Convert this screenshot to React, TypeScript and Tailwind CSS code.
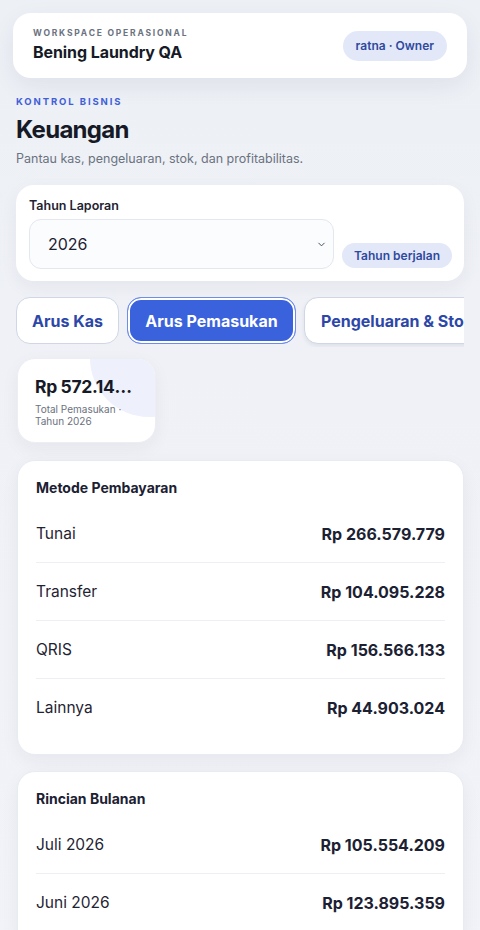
import { ChevronDown } from 'lucide-react';

type Row = { label: string; value: string };

const methods: Row[] = [
    { label: 'Tunai', value: 'Rp 266.579.779' },
    { label: 'Transfer', value: 'Rp 104.095.228' },
    { label: 'QRIS', value: 'Rp 156.566.133' },
    { label: 'Lainnya', value: 'Rp 44.903.024' },
];

const months: Row[] = [
    { label: 'Juli 2026', value: 'Rp 105.554.209' },
    { label: 'Juni 2026', value: 'Rp 123.895.359' },
];

function ListCard({ title, rows, more }: { title: string; rows: Row[]; more?: boolean }) {
    return (
        <div className="bg-white rounded-[18px] border border-[#e8ebf2] shadow-[0_6px_18px_rgba(30,41,80,0.05)] px-[18px] pt-[17px] pb-[17px]">
            <h2 className="text-[14px] leading-5 font-bold text-[#1b2132] mb-[7px]">{title}</h2>
            <div className={`divide-y divide-[#eceff4] ${more ? 'border-b border-[#eceff4]' : ''}`}>
                {rows.map(r => (
                    <div key={r.label} className="flex items-center justify-between h-[58px]">
                        <span className="text-[15.5px] text-[#1f2433]">{r.label}</span>
                        <span className="text-[16px] font-bold text-[#1b2132]">{r.value}</span>
                    </div>
                ))}
            </div>
        </div>
    );
}

export default function App() {
    return (
        <div className="min-h-screen bg-gradient-to-b from-[#edf0f5] to-[#f2f3f8] font-['Inter',sans-serif] pb-6 overflow-hidden">
            <div className="pt-[13px] px-[13px]">
                <div className="bg-white rounded-[18px] shadow-[0_8px_24px_rgba(30,41,80,0.07)] h-[65px] pl-5 pr-5 flex items-center justify-between">
                    <div>
                        <p className="text-[8.5px] font-bold tracking-[0.21em] text-[#6b7280] uppercase leading-3">Workspace Operasional</p>
                        <p className="text-[16px] font-bold text-[#151a26] tracking-[-0.005em] leading-6 mt-[1px]">Bening Laundry QA</p>
                    </div>
                    <span className="h-[30px] px-[13px] rounded-full bg-[#e3e8f9] text-[#2f4a9e] text-[12px] font-semibold flex items-center">ratna · Owner</span>
                </div>
            </div>

            <div className="px-4">
                <p className="mt-[18px] text-[9.5px] font-bold tracking-[0.2em] text-[#3f60d8] uppercase leading-3">Kontrol Bisnis</p>
                <h1 className="mt-[6px] text-[24px] leading-8 font-bold text-[#151a26] tracking-[-0.03em]">Keuangan</h1>
                <p className="mt-[5px] text-[12.5px] text-[#6b7280] leading-4">Pantau kas, pengeluaran, stok, dan profitabilitas.</p>

                <div className="mt-[18px] bg-white rounded-[18px] shadow-[0_6px_18px_rgba(30,41,80,0.05)] h-[96px] pl-[13px] pr-[12px] pt-[13px]">
                    <p className="text-[12.5px] font-semibold text-[#1f2433] leading-4">Tahun Laporan</p>
                    <div className="flex items-end gap-2 mt-[5px]">
                        <div className="flex-1 h-[50px] rounded-[12px] border border-[#e3e7ef] bg-[#fbfcfe] flex items-center justify-between pl-[18px] pr-[6px]">
                            <span className="text-[16px] text-[#1b2132]">2026</span>
                            <ChevronDown size={11} strokeWidth={2} className="text-[#374151]" />
                        </div>
                        <span className="shrink-0 whitespace-nowrap h-[25px] px-[12px] rounded-full bg-[#e3e8f9] text-[#2f4a9e] text-[12px] font-semibold flex items-center mb-[1px]">Tahun berjalan</span>
                    </div>
                </div>

                <div className="mt-4 flex gap-2 overflow-hidden pb-[3px]">
                    <button className="shrink-0 h-[47px] w-[103px] rounded-[14px] border border-[#cfd6e6] bg-white text-[#2d47a8] text-[16px] font-bold">Arus Kas</button>
                    <button className="shrink-0 h-[47px] w-[169px] rounded-[14px] border border-[#6f8ce8] bg-[#3a62dc] shadow-[inset_0_0_0_2px_#ffffff] text-white text-[16px] font-bold p-[2px]">Arus Pemasukan</button>
                    <button className="shrink-0 h-[47px] px-[16px] rounded-[14px] border border-[#cfd6e6] bg-white text-[#2d47a8] text-[16px] font-bold shadow-[0_2px_4px_rgba(30,41,80,0.08)]">Pengeluaran &amp; Stok</button>
                </div>

                <div className="mt-[11px] pl-px">
                    <div className="relative overflow-hidden w-[139px] h-[85px] bg-white rounded-[18px] border border-[#eceef4] shadow-[0_6px_18px_rgba(30,41,80,0.05)] px-[17px] pt-[16px]">
                        <div className="absolute w-[118px] h-[118px] rounded-full bg-[#eef0fb] -top-[60px] -right-[53px]" />
                        <p className="relative text-[17.5px] font-bold text-[#151a26] tracking-[-0.02em] leading-6 truncate">Rp 572.144.164</p>
                        <p className="relative mt-[4px] text-[10px] leading-3 text-[#6b7280]">Total Pemasukan · Tahun 2026</p>
                    </div>
                </div>

                <div className="mt-[17px] pl-px">
                    <ListCard title="Metode Pembayaran" rows={methods} />
                </div>

                <div className="mt-[16px] pl-px">
                    <ListCard title="Rincian Bulanan" rows={months} more />
                </div>
            </div>
        </div>
    );
}
